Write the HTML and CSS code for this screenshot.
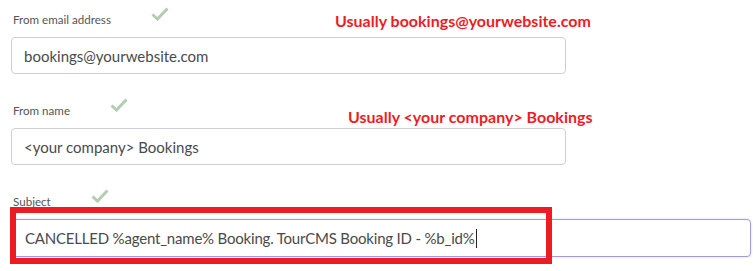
FILE: index.html
```html
<!DOCTYPE html>
<html lang="en">
<head>
    <meta charset="UTF-8">
    <title>Email settings</title>
    <link rel="stylesheet" href="styles.css">
</head>
<body>
    <div class="container">
        <div class="form-group">
            <div class="label-row">
                <label>From email address</label>
                <svg class="check" width="18" height="14" viewBox="0 0 18 14"><path d="M1.5 7.5 L6.5 12 L16.5 1.5" fill="none" stroke="#b3cdb0" stroke-width="3"/></svg>
            </div>
            <div class="field">bookings@yourwebsite.com</div>
            <span class="note note-email">Usually bookings@yourwebsite.com</span>
        </div>

        <div class="form-group">
            <div class="label-row">
                <label>From name</label>
                <svg class="check" width="18" height="14" viewBox="0 0 18 14"><path d="M1.5 7.5 L6.5 12 L16.5 1.5" fill="none" stroke="#b3cdb0" stroke-width="3"/></svg>
            </div>
            <div class="field">&lt;your company&gt; Bookings</div>
            <span class="note note-name">Usually &lt;your company&gt; Bookings</span>
        </div>

        <div class="form-group subject">
            <div class="label-row">
                <label>Subject</label>
                <svg class="check" width="18" height="14" viewBox="0 0 18 14"><path d="M1.5 7.5 L6.5 12 L16.5 1.5" fill="none" stroke="#b3cdb0" stroke-width="3"/></svg>
            </div>
            <div class="field focused">CANCELLED %agent_name% Booking. TourCMS Booking ID - %b_id%<span class="caret"></span></div>
            <div class="highlight"></div>
        </div>
    </div>
</body>
</html>
```

FILE: styles.css
```css
* {
    margin: 0;
    padding: 0;
    box-sizing: border-box;
}

body {
    background: #fff;
    font-family: Lato, "Open Sans", sans-serif;
    color: #555;
}

.container {
    padding: 8px 0 0 11px;
    width: 753px;
}

.form-group {
    position: relative;
    margin-bottom: 25px;
}

.label-row {
    display: flex;
    align-items: center;
    height: 22px;
    margin-bottom: 7px;
}

label {
    font-size: 11.6px;
    color: #555;
    padding-left: 2px;
}

.check {
    align-self: flex-start;
    margin-top: -1px;
    margin-left: 40px;
}

.field {
    width: 555px;
    height: 37px;
    border: 1px solid #ccd0d5;
    border-radius: 4px;
    padding: 0 12px;
    display: flex;
    align-items: center;
    font-size: 15px;
    color: #4a4a4a;
}

.field.focused {
    width: 739px;
    height: 38px;
    margin-left: 1px;
    border-color: #a597d8;
    box-shadow: 0 0 2px rgba(165, 151, 216, 0.5);
    letter-spacing: -0.2px;
}

.caret {
    display: inline-block;
    width: 1px;
    height: 19px;
    background: #222;
    margin-left: 1px;
}

.note {
    position: absolute;
    font-size: 16px;
    font-weight: bold;
    color: #ed1c24;
    white-space: nowrap;
}

.note-email {
    left: 324px;
    top: 3px;
}

.note-name {
    left: 337px;
    top: 8px;
}

.highlight {
    position: absolute;
    left: -1px;
    top: 17px;
    width: 542px;
    height: 57px;
    border: 6px solid #ed1c24;
    pointer-events: none;
}
```
